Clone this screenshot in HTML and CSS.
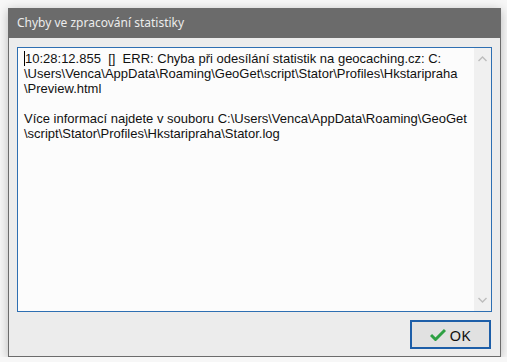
FILE: index.html
```html
<!DOCTYPE html>
<html lang="cs">
<head>
    <meta charset="UTF-8">
    <title>Chyby ve zpracování statistiky</title>
    <link rel="stylesheet" href="styles.css">
</head>
<body>
    <div class="dialog">
        <div class="titleBar">Chyby ve zpracování statistiky</div>
        <div class="dialogBody">
            <div class="memo">
                <div class="memoText"><span class="caret"></span>10:28:12.855  []  ERR: Chyba při odesílání statistik na geocaching.cz: C:
\Users\Venca\AppData\Roaming\GeoGet\script\Stator\Profiles\Hkstaripraha
\Preview.html

Více informací najdete v souboru C:\Users\Venca\AppData\Roaming\GeoGet
\script\Stator\Profiles\Hkstaripraha\Stator.log</div>
                <div class="scrollBar">
                    <svg class="arrow" width="9" height="6" viewBox="0 0 9 6"><path d="M0.5 5 L4.5 1 L8.5 5" fill="none" stroke="#bdbdbd" stroke-width="1.4"/></svg>
                    <svg class="arrow" width="9" height="6" viewBox="0 0 9 6"><path d="M0.5 1 L4.5 5 L8.5 1" fill="none" stroke="#bdbdbd" stroke-width="1.4"/></svg>
                </div>
            </div>
            <div class="buttonRow">
                <button class="okButton">
                    <svg width="16" height="13" viewBox="0 0 16 13"><path d="M1 7 L5.5 11.5 L15 2" fill="none" stroke="#2ea043" stroke-width="3" stroke-linejoin="round"/></svg>
                    OK
                </button>
            </div>
        </div>
    </div>
</body>
</html>
```

FILE: styles.css
```css
body { margin: 0; background-color: #f7f7f7; font-family: "Liberation Sans", Arial, sans-serif; }
.dialog {
    margin: 8px 0 0 8px;
    width: 493px;
    height: 349px;
    box-sizing: border-box;
    border: 1px solid #6c6c6c;
    border-top: none;
    background-color: #ececec;
    display: flex;
    flex-direction: column;
    box-shadow: 0 2px 10px rgba(0, 0, 0, 0.25);
}
.titleBar {
    height: 30px;
    margin: 0 -1px;
    padding-left: 9px;
    background-color: #6b6b6b;
    color: #ececec;
    font-family: "Noto Sans", sans-serif;
    font-size: 12px;
    line-height: 29px;
}
.dialogBody { flex: 1; padding: 9px 8px 7px 8px; display: flex; flex-direction: column; }
.memo {
    height: 265px;
    box-sizing: border-box;
    border: 1px solid #2e6fb2;
    background-color: #fcfcfc;
    display: flex;
}
.memoText {
    flex: 1;
    padding: 3px 0 0 6px;
    white-space: pre;
    font-size: 13px;
    line-height: 15px;
    color: #111;
}
.caret {
    display: inline-block;
    width: 1px;
    height: 15px;
    background-color: #000;
    vertical-align: top;
    margin-right: 0;
}
.scrollBar {
    width: 17px;
    background-color: #f0f0f0;
    display: flex;
    flex-direction: column;
    justify-content: space-between;
    align-items: center;
    padding: 8px 0 8px;
}
.arrow { display: block; }
.buttonRow { display: flex; justify-content: flex-end; margin-top: 8px; margin-right: 1px; }
.okButton {
    width: 81px;
    height: 29px;
    box-sizing: border-box;
    border: 2px solid #1d5ea8;
    background-color: #e1e1e1;
    font-family: "Noto Sans", sans-serif;
    font-size: 15px;
    color: #111;
    display: flex;
    align-items: center;
    justify-content: center;
    gap: 3px;
    padding: 0;
}
```
